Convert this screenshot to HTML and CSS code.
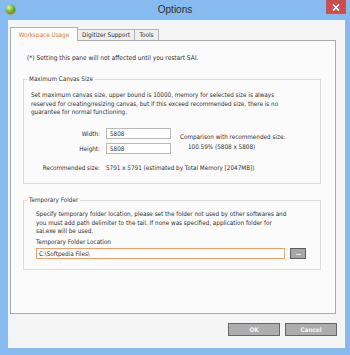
FILE: index.html
```html
<!DOCTYPE html>
<html>
<head>
<meta charset="utf-8">
<link rel="stylesheet" href="styles.css">
</head>
<body>
<div class="window">
  <div class="titlebar">
    <div class="tb-left">
      <svg class="appicon" width="11" height="11" viewBox="0 0 11 11">
        <defs>
          <radialGradient id="g" cx="0.35" cy="0.3" r="0.8">
            <stop offset="0" stop-color="#f4f07a"/>
            <stop offset="0.45" stop-color="#7cc43c"/>
            <stop offset="1" stop-color="#2f7a2a"/>
          </radialGradient>
        </defs>
        <circle cx="5.5" cy="5.5" r="5" fill="url(#g)"/>
        <path d="M2 7.5 Q5.5 10.5 9.5 6.5 L9.5 8 Q6 11 2 8.5 Z" fill="#e07a2a"/>
      </svg>
    </div>
    <div class="title">Options</div>
    <div class="tb-right">
      <div class="close">
        <svg width="8" height="7" viewBox="0 0 8 7"><path d="M1 0.5 L7 6.5 M7 0.5 L1 6.5" stroke="#fff" stroke-width="1.6"/></svg>
      </div>
    </div>
  </div>
  <div class="client">
    <div class="tabs">
      <div class="tab active">Workspace Usage</div>
      <div class="tab t2">Digitizer Support</div>
      <div class="tab t3">Tools</div>
    </div>
    <div class="panel">
      <p class="notice">(*) Setting this pane will not affected until you restart SAI.</p>
      <div class="group g1">
        <span class="legend">Maximum Canvas Size</span>
        <p class="para">Set maximum canvas size, upper bound is 10000, memory for selected size is always<br>reserved for creating/resizing canvas, but if this exceed recommended size, there is no<br>guarantee for normal functioning.</p>
        <div class="sizes">
          <div class="fields">
            <span class="lbl">Width:</span><div class="input">5808</div>
            <span class="lbl">Height:</span><div class="input">5808</div>
          </div>
          <div class="compare">Comparison with recommended size:<br><span class="pct">100.59% (5808 x 5808)</span></div>
        </div>
        <div class="rec"><span class="lbl">Recommended size:</span><span>5791 x 5791 (estimated by Total Memory [2047MB])</span></div>
      </div>
      <div class="group g2">
        <span class="legend">Temporary Folder</span>
        <p class="para clip">Specify temporary folder location, please set the folder not used by other softwares and<br>you must add path delimiter to the tail. If none was specified, application folder for<br>sai.exe will be used.</p>
        <div class="loc-label">Temporary Folder Location</div>
        <div class="loc-row">
          <div class="input path">C:\Softpedia Files\</div>
          <div class="browse"><span class="dots"></span></div>
        </div>
      </div>
    </div>
    <div class="buttons">
      <div class="btn">OK</div>
      <div class="btn">Cancel</div>
    </div>
  </div>
</div>
</body>
</html>
```
FILE: styles.css
```css
* { box-sizing: border-box; }
html, body { margin: 0; padding: 0; }
body {
  width: 350px;
  height: 355px;
  overflow: hidden;
  font-family: "DejaVu Sans Condensed", "DejaVu Sans", sans-serif;
  color: #2e2e2e;
}
p { margin: 0; }

.window {
  width: 350px;
  height: 355px;
  background: #87bbef;
  display: flex;
  flex-direction: column;
}

.titlebar {
  height: 20px;
  display: grid;
  grid-template-columns: 1fr auto 1fr;
  align-items: start;
}
.tb-left { padding: 4px 0 0 5px; display: flex; }
.appicon { display: block; }
.title {
  font-family: "Liberation Sans", Arial, sans-serif;
  font-size: 10px;
  line-height: 20px;
  color: #2c2c2c;
}
.tb-right { display: flex; justify-content: flex-end; padding-right: 4px; }
.close {
  width: 20px;
  height: 14px;
  background: #c75050;
  display: flex;
  align-items: center;
  justify-content: center;
}
.close svg { display: block; }

.client {
  flex: 1;
  margin: 0 5px 7px 8px;
  background: #f5f5f5;
  padding: 7px 8px 0 2px;
  display: flex;
  flex-direction: column;
}

.tabs {
  display: flex;
  align-items: flex-end;
  height: 13px;
  position: relative;
  z-index: 1;
}
.tab {
  font-size: 6.3px;
  height: 11px;
  line-height: 10px;
  border: 1px solid #b5b5b5;
  border-bottom: none;
  background: #efefef;
  text-align: center;
  white-space: nowrap;
}
.tab.active {
  width: 68px;
  height: 14px;
  margin-bottom: -1px;
  background: #fbfbfb;
  color: #d07a40;
  line-height: 13px;
  border-color: #b0b0b0;
}
.tab.t2 { width: 57px; border-left: none; }
.tab.t3 { width: 24px; border-left: none; }

.panel {
  height: 274px;
  margin-right: 1px;
  border: 1px solid #ababab;
  background: #fbfbfb;
  padding: 0 0 0 12px;
  display: flex;
  flex-direction: column;
}

.notice {
  font-size: 6.55px;
  line-height: 8px;
  margin: 13px 0 0 4px;
  white-space: nowrap;
}

.group {
  position: relative;
  width: 298px;
  border: 1px solid #dcdcdc;
  font-size: 6.3px;
}
.legend {
  position: absolute;
  top: -5px;
  left: 3px;
  padding: 0 2px;
  line-height: 8px;
  background: #fbfbfb;
  color: #333;
}
.para {
  line-height: 8.5px;
  white-space: nowrap;
}

.g1 {
  margin-top: 17px;
  height: 105px;
  padding: 11px 0 0 7px;
}
.sizes {
  display: flex;
  margin-top: 11.5px;
}
.fields {
  display: grid;
  grid-template-columns: 69px 65px;
  column-gap: 6px;
  row-gap: 4px;
  align-items: center;
}
.lbl { text-align: right; line-height: 8px; }
.input {
  height: 11px;
  border: 1px solid #b9b9b9;
  background: #fff;
  line-height: 9px;
  padding-left: 3px;
  white-space: nowrap;
}
.compare {
  margin: 4px 0 0 9px;
  line-height: 10px;
  white-space: nowrap;
}
.pct { padding-left: 8px; }
.rec {
  display: grid;
  grid-template-columns: 69px auto;
  column-gap: 6px;
  margin-top: 10px;
  line-height: 8px;
  white-space: nowrap;
}

.g2 {
  margin-top: 16px;
  height: 70px;
  padding: 9px 0 0 12px;
}
.clip { height: 22.5px; overflow: hidden; }
.loc-label { margin-top: 5.5px; line-height: 8px; }
.loc-row { display: flex; margin-top: 2px; gap: 5px; }
.input.path {
  width: 249px;
  border-color: #e2a470;
  padding-left: 2px;
}
.browse {
  width: 16px;
  height: 11px;
  background: #a6a6a6;
  border: 1px solid #5e5e5e;
  display: flex;
  align-items: flex-end;
  justify-content: center;
  padding-bottom: 3px;
}
.dots { width: 5px; height: 1px; background: #e8e8e8; }

.buttons {
  display: flex;
  justify-content: flex-end;
  gap: 5px;
  margin-top: 9px;
}
.btn {
  width: 52px;
  height: 13px;
  background: #adadad;
  border: 1px solid #676767;
  color: #f4f4f4;
  font-size: 6.3px;
  font-weight: bold;
  line-height: 11px;
  text-align: center;
}
```
